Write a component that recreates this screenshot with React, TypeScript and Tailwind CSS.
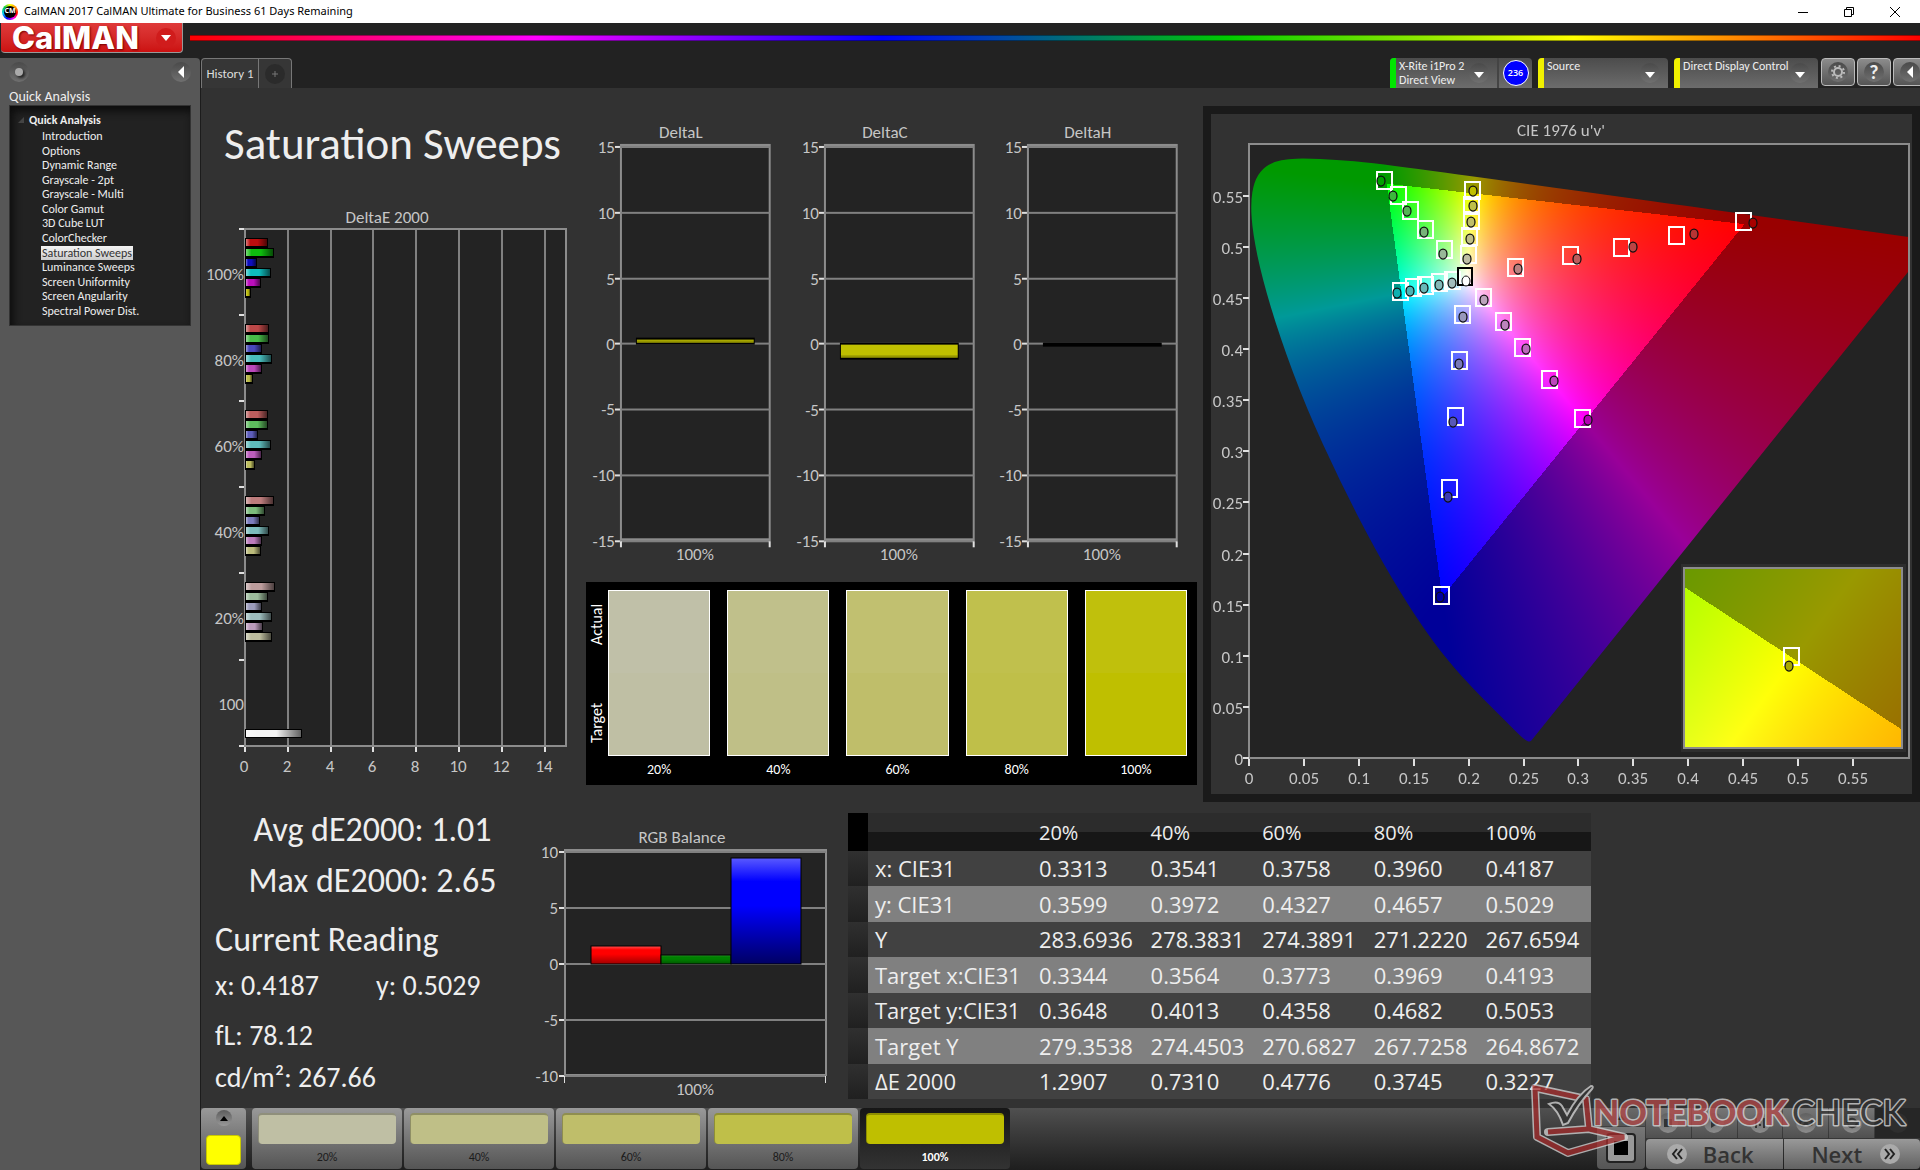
import React, { useEffect, useRef } from "react";

/* ---------- measurement data ---------- */

const STEPS = [
  "Introduction", "Options", "Dynamic Range", "Grayscale - 2pt", "Grayscale - Multi", "Color Gamut", "3D Cube LUT",
  "ColorChecker", "Saturation Sweeps", "Luminance Sweeps", "Screen Uniformity", "Screen Angularity", "Spectral Power Dist.",
];

const DELTA_E = [
  { label: "100%", low: 14, bars: [23, 29, 12, 26, 16, 6] },
  { label: "80%", low: 72, bars: [24, 24, 17, 27, 17, 8] },
  { label: "60%", low: 94, bars: [23, 23, 13, 26, 17, 10] },
  { label: "40%", low: 124, bars: [29, 20, 15, 24, 17, 16] },
  { label: "20%", low: 156, bars: [30, 23, 17, 27, 18, 27] },
];

const SWATCHES = [
  { label: "20%", actual: "#c0c0a8", target: "#bfbfa4" },
  { label: "40%", actual: "#c0c08b", target: "#bfbf87" },
  { label: "60%", actual: "#c1c070", target: "#bfbe6a" },
  { label: "80%", actual: "#c0c04d", target: "#bfbf49" },
  { label: "100%", actual: "#c0c00c", target: "#bfbf00" },
];

const TABLE = [
  ["x: CIE31", "0.3313", "0.3541", "0.3758", "0.3960", "0.4187"],
  ["y: CIE31", "0.3599", "0.3972", "0.4327", "0.4657", "0.5029"],
  ["Y", "283.6936", "278.3831", "274.3891", "271.2220", "267.6594"],
  ["Target x:CIE31", "0.3344", "0.3564", "0.3773", "0.3969", "0.4193"],
  ["Target y:CIE31", "0.3648", "0.4013", "0.4358", "0.4682", "0.5053"],
  ["Target Y", "279.3538", "274.4503", "270.6827", "267.7258", "264.8672"],
  ["ΔE 2000", "1.2907", "0.7310", "0.4776", "0.3745", "0.3227"],
];

/* target x, target y, reading x, reading y, reading colour */
const PINS: [number, number, number, number, string][] = [
  [174, 67, 170, 67, "#00a000"], [188, 82, 182, 82, "#3cb83c"], [200, 97, 196, 97, "#55b455"],
  [215, 116, 213, 118, "#78b478"], [234, 136, 232, 140, "#98b898"],
  [258, 141, 256, 145, "#bfbfa4"], [259, 123, 259, 125, "#bfbf87"], [261, 107, 260, 108, "#bfbe6a"],
  [261, 92, 262, 92, "#bfbf49"], [262, 77, 262, 77, "#bfbf00"],
  [190, 178, 186, 179, "#10b0b0"], [203, 174, 199, 177, "#4cb4b4"], [215, 172, 213, 174, "#68b8b8"],
  [229, 169, 228, 171, "#84b8b8"], [242, 167, 241, 169, "#a2bcbc"],
  [273, 184, 273, 186, "#bca4bc"], [293, 208, 294, 211, "#bc84bc"], [312, 234, 315, 235, "#bc68bc"],
  [339, 266, 343, 267, "#bc48bc"], [372, 305, 377, 306, "#b400b4"],
  [252, 201, 252, 203, "#9898bc"], [249, 247, 248, 250, "#7878b8"], [245, 303, 242, 308, "#5858b8"],
  [239, 375, 237, 383, "#3c3cb4"], [231, 482, 229, 483, "#0000a0"],
  [305, 154, 307, 155, "#bc8080"], [360, 142, 366, 145, "#bc5c5c"], [411, 134, 422, 133, "#bc4444"],
  [466, 122, 483, 120, "#b83434"], [533, 108, 542, 109, "#a80000"],
];

/* ---------- chromaticity diagram ---------- */

const LOCUS_XY = [
  [0.1741, 0.005], [0.1733, 0.0048], [0.1714, 0.0051], [0.1689, 0.0069], [0.1644, 0.0109], [0.1566, 0.0177],
  [0.151, 0.0227], [0.144, 0.0297], [0.1355, 0.0399], [0.1241, 0.0578], [0.1096, 0.0868], [0.0913, 0.1327],
  [0.0687, 0.2007], [0.0454, 0.295], [0.0235, 0.4127], [0.0082, 0.5384], [0.0039, 0.6548], [0.0139, 0.7502],
  [0.0389, 0.812], [0.0743, 0.8338], [0.1142, 0.8262], [0.1547, 0.8059], [0.2296, 0.7543], [0.3016, 0.6923],
  [0.3731, 0.6245], [0.4441, 0.5547], [0.5125, 0.4866], [0.5752, 0.4242], [0.627, 0.3725], [0.6915, 0.3083],
  [0.7347, 0.2653],
];

const CIE_W = 701;
const CIE_H = 680;
const PLOT = { left: 38, top: 30, right: 698, bottom: 644 };
const U_SCALE = 1098;
const V_SCALE = 1022;
const INSET = { left: 473, top: 454, width: 218, height: 180 };

function colourAt(x: number, y: number): [number, number, number] {
  const X = x / y;
  const Z = (1 - x - y) / y;
  const r = 3.2406 * X - 1.5372 - 0.4986 * Z;
  const g = -0.9689 * X + 1.8758 + 0.0415 * Z;
  const b = 0.0557 * X - 0.204 + 1.057 * Z;
  const inside = r >= 0 && g >= 0 && b >= 0;
  const k = (inside ? 255 : 153) / Math.max(r, g, b, 0.0001);
  return [Math.max(r, 0) * k, Math.max(g, 0) * k, Math.max(b, 0) * k];
}

function field(width: number, height: number, toXy: (px: number, py: number) => [number, number]) {
  const canvas = document.createElement("canvas");
  canvas.width = width;
  canvas.height = height;
  const ctx = canvas.getContext("2d")!;
  const image = ctx.createImageData(width, height);
  for (let j = 0; j < height; j++) {
    for (let i = 0; i < width; i++) {
      const [x, y] = toXy(i, j);
      const [r, g, b] = colourAt(x, y);
      const o = (j * width + i) * 4;
      image.data[o] = r;
      image.data[o + 1] = g;
      image.data[o + 2] = b;
      image.data[o + 3] = 255;
    }
  }
  ctx.putImageData(image, 0, 0);
  return canvas;
}

function CieChart() {
  const ref = useRef<HTMLCanvasElement>(null);
  useEffect(() => {
    const ctx = ref.current?.getContext("2d");
    if (!ctx) return;
    const horseshoe = field(CIE_W, CIE_H, (px, py) => {
      const u = (px - PLOT.left) / U_SCALE;
      const v = (PLOT.bottom - py) / V_SCALE;
      const d = 6 * u - 16 * v + 12;
      return [(9 * u) / d, Math.max((4 * v) / d, 0.0005)];
    });
    const mask = horseshoe.getContext("2d")!;
    const p = LOCUS_XY.map(([x, y]) => {
      const d = -2 * x + 12 * y + 3;
      return [PLOT.left + ((4 * x) / d) * U_SCALE, PLOT.bottom - ((9 * y) / d) * V_SCALE];
    });
    mask.globalCompositeOperation = "destination-in";
    mask.beginPath();
    mask.moveTo(p[0][0], p[0][1]);
    for (let i = 1; i < p.length - 1; i++) {
      mask.quadraticCurveTo(p[i][0], p[i][1], (p[i][0] + p[i + 1][0]) / 2, (p[i][1] + p[i + 1][1]) / 2);
    }
    mask.lineTo(p[p.length - 1][0], p[p.length - 1][1]);
    mask.closePath();
    mask.fill();

    ctx.fillStyle = "#232323";
    ctx.fillRect(PLOT.left, PLOT.top, PLOT.right - PLOT.left, PLOT.bottom - PLOT.top);
    ctx.save();
    ctx.beginPath();
    ctx.rect(PLOT.left, PLOT.top, PLOT.right - PLOT.left, PLOT.bottom - PLOT.top);
    ctx.clip();
    ctx.drawImage(horseshoe, 0, 0);
    ctx.restore();

    const detail = field(INSET.width, INSET.height, (px, py) => [
      0.4193 + (px / INSET.width - 0.5) * 0.05,
      0.5053 - (py / INSET.height - 0.5) * 0.05,
    ]);
    ctx.fillStyle = "#2e2e2e";
    ctx.fillRect(INSET.left - 3, INSET.top - 4, INSET.width + 7, INSET.height + 8);
    ctx.drawImage(detail, INSET.left, INSET.top);
  }, []);

  return (
    <figure className="relative border-8 border-[#1a1a1a] bg-[#323232]">
      <canvas ref={ref} width={CIE_W} height={CIE_H} className="block w-full" />
      <svg viewBox="0 0 701 680" className="absolute inset-0 h-full w-full" fontSize="17" fill="#c6c6c6">
        <text x="350" y="22" textAnchor="middle">CIE 1976 u'v'</text>
        <rect x="38" y="30" width="660" height="614" fill="none" stroke="#8c8c8c" strokeWidth="2" />
        {["0", "0.05", "0.1", "0.15", "0.2", "0.25", "0.3", "0.35", "0.4", "0.45", "0.5", "0.55"].map((t, i) => (
          <g key={t}>
            <rect x="32" y={643 - Math.round(i * 51.1)} width="6" height="2" fill="#e0e0e0" />
            <text x="32" y={651 - Math.round(i * 51.1)} textAnchor="end">{t}</text>
            <rect x={37 + Math.round(i * 54.9)} y="645" width="2" height="7" fill="#e0e0e0" />
            <text x={38 + Math.round(i * 54.9)} y="670" textAnchor="middle">{t}</text>
          </g>
        ))}
        {PINS.map(([tx, ty, rx, ry, c]) => (
          <g key={`${tx}-${ty}`}>
            <rect x={tx - 8} y={ty - 9} width="15" height="17" fill="none" stroke="#fff" strokeWidth="1.25" shapeRendering="crispEdges" />
            <ellipse cx={rx} cy={ry} rx="4" ry="5" fill={c} stroke="#101010" strokeWidth="1.25" />
          </g>
        ))}
        <rect x="247" y="154" width="14" height="17" fill="none" stroke="#000" strokeWidth="1.25" shapeRendering="crispEdges" />
        <ellipse cx="255" cy="167" rx="4" ry="5" fill="#fff" stroke="#101010" />
        <rect x="473" y="454" width="218" height="180" fill="none" stroke="#8c8c8c" strokeWidth="2" />
        <rect x="573" y="534" width="15" height="17" fill="none" stroke="#fff" strokeWidth="1.25" shapeRendering="crispEdges" />
        <ellipse cx="578" cy="552" rx="4" ry="5" fill="#a8a800" stroke="#101010" strokeWidth="1.25" />
      </svg>
    </figure>
  );
}

/* ---------- bar charts ---------- */

function DeltaEChart() {
  return (
    <svg viewBox="0 0 379 570" className="block w-full" fontSize="17" fill="#c6c6c6">
      <defs>
        <linearGradient id="barShade">
          <stop offset="0" stopColor="#fff" stopOpacity=".45" />
          <stop offset=".2" stopColor="#fff" stopOpacity="0" />
          <stop offset=".55" stopColor="#000" stopOpacity="0" />
          <stop offset="1" stopColor="#000" stopOpacity=".6" />
        </linearGradient>
      </defs>
      <text x="186" y="18" textAnchor="middle">DeltaE 2000</text>
      <rect x="44" y="24" width="321" height="517" fill="#232323" />
      {[1, 2, 3, 4, 5, 6, 7].map((i) => (
        <rect key={i} x={43 + Math.round(i * 42.8)} y="24" width="2" height="522" fill="#808080" />
      ))}
      <rect x="44" y="24" width="321" height="517" fill="none" stroke="#8c8c8c" strokeWidth="2" />
      {[0, 1, 2, 3, 4, 5, 6].map((i) => (
        <rect key={i} x="38" y={23 + Math.round(i * 86.1)} width="5" height="2" fill="#e0e0e0" />
      ))}
      {[0, 1, 2, 3, 4, 5, 6, 7].map((i) => (
        <g key={i}>
          <rect x={43 + Math.round(i * 42.8)} y="542" width="2" height="5" fill="#e0e0e0" />
          <text x={43 + Math.round(i * 42.8)} y="567" textAnchor="middle">{i * 2}</text>
        </g>
      ))}
      {DELTA_E.map(({ label, low, bars }, g) => {
        const top = Math.round(g * 86.1) + 33;
        const h = 188;
        const colours = [
          `rgb(${h},${low},${low})`, `rgb(${low},${h},${low})`, `rgb(${low},${low},${h})`,
          `rgb(${low},${h},${h})`, `rgb(${h},${low},${h})`, `rgb(${h},${h},${low})`,
        ];
        return (
          <g key={label}>
            <text x="43" y={top + 42} textAnchor="end">{label}</text>
            {bars.map((w, i) => (
              <g key={i}>
                <rect x="44" y={top + i * 10} width={w} height="10" fill="#000" />
                <rect x="45" y={top + i * 10 + 1} width={w - 2} height="7" fill={colours[i]} />
                <rect x="45" y={top + i * 10 + 1} width={w - 2} height="7" fill="url(#barShade)" />
              </g>
            ))}
          </g>
        );
      })}
      <text x="43" y="505" textAnchor="end">100</text>
      <rect x="44" y="524" width="57" height="9" fill="#000" />
      <rect x="45" y="525" width="55" height="7" fill="#f4f4f4" />
      <rect x="45" y="525" width="55" height="7" fill="url(#barShade)" />
    </svg>
  );
}

function DeltaChart({ name, y, height, colour }: { name: string; y: number; height: number; colour: string }) {
  return (
    <svg viewBox="0 0 204 450" className="block w-full" fontSize="17" fill="#c6c6c6">
      <text x="95" y="18" textAnchor="middle">{name}</text>
      <rect x="35" y="25" width="149" height="396" fill="#232323" stroke="#8c8c8c" strokeWidth="2" />
      <rect x="35" y="24" width="149" height="4" fill="#8c8c8c" />
      <rect x="35" y="419" width="149" height="3" fill="#8c8c8c" />
      {[15, 10, 5, 0, -5, -10, -15].map((t, i) => (
        <g key={t}>
          <rect x="35" y={26 + Math.round(i * 65.8)} width="149" height="2" fill="#808080" />
          <rect x="29" y={26 + Math.round(i * 65.8)} width="5" height="2" fill="#e0e0e0" />
          <text x="29" y={33 + Math.round(i * 65.8)} textAnchor="end">{t}</text>
        </g>
      ))}
      <rect x="34" y="422" width="2" height="6" fill="#e0e0e0" />
      <rect x="183" y="422" width="2" height="6" fill="#e0e0e0" />
      <text x="109" y="441" textAnchor="middle">100%</text>
      <rect x="50" y={y} width="119" height={height} fill="#000" />
      <rect x="51" y={y + 2} width="117" height={Math.max(height - 4, 0)} fill={colour} />
      <rect x="51" y={y + height - 4} width="117" height="1" fill="#000" opacity=".35" />
    </svg>
  );
}

function RgbBalance() {
  return (
    <svg viewBox="0 0 318 284" className="block w-full" fontSize="17" fill="#c6c6c6">
      <defs>
        {[["balR", "#ff5050", "#ff0000", "#a00000"], ["balG", "#309830", "#008000", "#005800"], ["balB", "#5a5aff", "#0000ff", "#000064"]].map(
          ([id, a, b, c]) => (
            <linearGradient key={id} id={id} x1="0" y1="0" x2="0" y2="1">
              <stop offset="0" stopColor={a} />
              <stop offset=".22" stopColor={b} />
              <stop offset=".45" stopColor={b} />
              <stop offset="1" stopColor={c} />
            </linearGradient>
          ),
        )}
      </defs>
      <text x="152" y="23" textAnchor="middle">RGB Balance</text>
      <rect x="35" y="30" width="261" height="225" fill="#232323" stroke="#8c8c8c" strokeWidth="2" />
      <rect x="35" y="29" width="261" height="4" fill="#8c8c8c" />
      {[10, 5, 0, -5, -10].map((t, i) => (
        <g key={t}>
          <rect x="35" y={31 + i * 56} width="261" height="2" fill="#808080" />
          <rect x="29" y={31 + i * 56} width="5" height="2" fill="#e0e0e0" />
          <text x="28" y={38 + i * 56} textAnchor="end">{t}</text>
        </g>
      ))}
      <rect x="34" y="256" width="1" height="7" fill="#e0e0e0" />
      <rect x="295" y="256" width="1" height="7" fill="#e0e0e0" />
      <text x="165" y="275" textAnchor="middle">100%</text>
      <rect x="61" y="126" width="70" height="18" fill="url(#balR)" stroke="#000" />
      <rect x="131" y="135" width="70" height="9" fill="url(#balG)" stroke="#000" />
      <rect x="201" y="38" width="70" height="106" fill="url(#balB)" stroke="#000" />
    </svg>
  );
}

/* ---------- small drawings ---------- */

function Knob({ children, className = "" }: { children: React.ReactNode; className?: string }) {
  return (
    <span className={`flex size-5 shrink-0 items-center justify-center rounded-full bg-linear-to-b from-[#4a4a4a] to-[#707070] ${className}`}>
      {children}
    </span>
  );
}

function DownArrow() {
  return (
    <svg viewBox="0 0 10 6" className="mt-1 h-1.5 w-2.5 fill-white"><path d="M0 0h10L5 6z" /></svg>
  );
}

function DeviceTab({ strip, lines, width, children }: { strip: string; lines: string[]; width: string; children?: React.ReactNode }) {
  return (
    <div className={`flex h-[30px] overflow-hidden rounded-t bg-linear-to-b from-[#4c4c4c] to-[#6c6c6c] ${width}`}>
      <span className={`w-1.5 shrink-0 ${strip}`} />
      <button type="button" className="flex grow items-start justify-between pt-px pr-2 pl-[3px] text-left text-xs leading-[14px] whitespace-nowrap text-[#eee]">
        <span>{lines.map((l) => <span key={l} className="block">{l}</span>)}</span>
        <Knob className="mt-1 -ml-1"><DownArrow /></Knob>
      </button>
      {children}
    </div>
  );
}

function NotebookcheckMark() {
  const box = "M28 52 L69 49 L66 19 L15 8 L17 57 L48 73 L104 57 L69 49";
  return (
    <svg viewBox="0 0 400 90" className="pointer-events-none absolute right-0 bottom-0 h-[90px] w-[400px] opacity-75" role="img" aria-label="NOTEBOOKCHECK">
      <path d={box} fill="none" stroke="#d8d8d8" strokeWidth="8" strokeLinejoin="round" strokeLinecap="round" />
      <path d={box} fill="none" stroke="#a52c2c" strokeWidth="5" strokeLinejoin="miter" />
      <path d="M29 24 Q38 20 42 26 L47 35 Q58 14 71 6 Q74 6 72 9 Q58 24 48 43 L43 45 Q38 30 29 24Z" fill="#303030" stroke="#d8d8d8" strokeWidth="2" />
      <g fontFamily="Lato, sans-serif" fontSize="34" stroke="#dcdcdc" strokeWidth="3" paintOrder="stroke" strokeLinejoin="round">
        <text x="73" y="45" fontWeight="900" fill="#b44848">NOTEBOOK</text>
        <text x="272" y="45" fontWeight="500" fill="#303030">CHECK</text>
      </g>
    </svg>
  );
}

const TRANSPORT = [
  <rect key="s" x="4" y="4" width="8" height="8" />,
  <path key="p" d="M5 3l8 5-8 5z" />,
  <path key="i" d="M3 3h2v10H3zM11 3h2v10h-2zM7 5h2v2H7zM7 9h2v2H7z" />,
  <path key="l" d="M8 8C6 5 2 5 2 8s4 3 6 0 6-3 6 0-4 3-6 0z" fill="none" stroke="#333" strokeWidth="2" />,
  <path key="r" d="M3 8a5 5 0 0 1 9-2M13 8a5 5 0 0 1-9 2" fill="none" stroke="#333" strokeWidth="2" />,
];
const TRANSPORT_NAMES = ["Stop", "Read", "Read series", "Read continuous", "Refresh"];

/* ---------- page ---------- */

export default function App() {
  return (
    <div className="relative flex min-h-screen flex-col overflow-hidden bg-[#222] font-[Carlito,Calibri,Lato,sans-serif] text-[#eee]">
      <header className="flex h-[23px] items-center bg-white pl-0.5 font-['Noto_Sans',sans-serif] text-[11px] text-black">
        <span className="flex size-4 items-center justify-center rounded-full bg-[conic-gradient(#ff0,#f80,#f00,#f0f,#00f,#0cf,#0c4,#ff0)]">
          <span className="flex size-3 items-center justify-center rounded-full bg-black text-[7px] font-bold text-white">CM</span>
        </span>
        <h1 className="ml-1.5 grow">CalMAN 2017 CalMAN Ultimate for Business 61 Days Remaining</h1>
        <div className="mr-0.5 flex w-[138px] items-center justify-around">
          <button type="button" aria-label="Minimize" className="size-4"><svg viewBox="0 0 16 16"><path d="M3 8.500h10" stroke="#000" /></svg></button>
          <button type="button" aria-label="Restore" className="size-4">
            <svg viewBox="0 0 16 16" fill="none" stroke="#000"><path d="M3.500 5.500h7v7h-7zM5.500 5.500v-2h7v7h-2" /></svg>
          </button>
          <button type="button" aria-label="Close" className="size-4"><svg viewBox="0 0 16 16" stroke="#000"><path d="M3 3l10 10M13 3L3 13" /></svg></button>
        </div>
      </header>

      <div className="flex h-[35px] items-start">
        <button type="button" className="ml-px flex h-[30px] w-[182px] items-center justify-between rounded-b border-r border-b border-[#999] bg-linear-to-b from-[#df3a3a] to-[#cc1010] pr-1.5 pl-[11px] text-white">
          <span className="font-[Inter,sans-serif] text-[31px] leading-7 font-extrabold [text-shadow:1px_1px_2px_#700]">CalMAN</span>
          <span className="flex size-5 items-center justify-center rounded-full bg-[#d01c1c]">
            <svg viewBox="0 0 10 6" className="h-1.5 w-2.5 fill-white"><path d="M0 0h10L5 6z" /></svg>
          </span>
        </button>
        <div className="mt-3 ml-[7px] h-1.5 grow border-y border-black/40 bg-[linear-gradient(90deg,#f00,#f0f,#00f,#0c0,#ff0,#f00)]" />
      </div>

      <div className="flex grow">
        <nav className="flex w-[200px] shrink-0 flex-col rounded-tr bg-[#575757] px-[9px]">
          <div className="flex h-7 items-center justify-between">
            <button type="button" aria-label="Record"><Knob><span className="size-2 rounded-full bg-[#aaa] shadow-[2px_2px_3px_#222]" /></Knob></button>
            <button type="button" aria-label="Collapse panel"><Knob><svg viewBox="0 0 6 12" className="h-3 w-1.5 fill-white"><path d="M6 0v12L0 6z" /></svg></Knob></button>
          </div>
          <h2 className="pt-0.5 text-sm leading-[17px]">Quick Analysis</h2>
          <div className="h-[221px] border border-[#333] bg-[#222] pt-1.5 shadow-[inset_3px_5px_8px_#0c0c0c]">
            <div className="flex h-4 items-center pl-2 text-xs font-bold">
              <svg viewBox="0 0 6 6" className="mr-[5px] size-1.5 fill-[#444]"><path d="M6 0v6H0z" /></svg>
              Quick Analysis
            </div>
            <ul className="mt-px flex h-[189px] flex-col justify-between pl-[31px] text-xs leading-[14px]">
              {STEPS.map((s) => (
                <li key={s} className="h-3.5">
                  <a href="#" className={s === "Saturation Sweeps" ? "block w-fit bg-linear-to-b from-[#f4f4f4] to-[#ccc] px-px text-[#333]" : "block w-fit px-px"}>{s}</a>
                </li>
              ))}
            </ul>
          </div>
        </nav>

        <div className="flex min-w-0 grow flex-col border-l border-[#1c1c1c]">
          <div className="flex h-[30px] items-start">
            <div className="flex h-[30px] rounded-t border border-b-0 border-[#777] bg-[#363636] text-[13px] text-[#ddd]">
              <button type="button" className="w-[57px] border-r border-[#777] whitespace-nowrap">History 1</button>
              <button type="button" aria-label="Add tab" className="px-1.5">
                <span className="flex size-5 items-center justify-center rounded-full bg-[#2b2b2b]">
                  <svg viewBox="0 0 8 8" className="size-2" stroke="#777"><path d="M4 1v6M1 4h6" /></svg>
                </span>
              </button>
            </div>
            <div className="ml-auto flex gap-1.5">
              <DeviceTab strip="bg-[#00e600]" lines={["X-Rite i1Pro 2", "Direct View"]} width="w-[142px]">
                <span className="flex w-[35px] shrink-0 items-center justify-center border-l-2 border-[#444]">
                  <span className="flex size-[26px] items-center justify-center rounded-full border border-white bg-[#0000ff] font-['Open_Sans',sans-serif] text-[9px] font-semibold text-white">236</span>
                </span>
              </DeviceTab>
              <DeviceTab strip="bg-[#f0f000]" lines={["Source"]} width="w-[130px]" />
              <DeviceTab strip="bg-[#f0f000]" lines={["Direct Display Control"]} width="w-[144px]" />
            </div>
            <div className="-mr-[7px] ml-[3px] flex gap-0.5">
              <button type="button" aria-label="Settings" className="flex h-7 w-[34px] items-center justify-center rounded border border-[#bbb] bg-linear-to-b from-[#8c8c8c] to-[#555]">
                <Knob>
                  <svg viewBox="0 0 16 16" className="size-4" fill="none" stroke="#bbb">
                    <circle cx="8" cy="8" r="4" strokeWidth="2" />
                    <circle cx="8" cy="8" r="6" strokeWidth="2" strokeDasharray="2 2.700" />
                  </svg>
                </Knob>
              </button>
              <button type="button" aria-label="Help" className="flex h-7 w-[34px] items-center justify-center rounded border border-[#bbb] bg-linear-to-b from-[#8c8c8c] to-[#555] text-xl leading-5 font-bold">
                <Knob>?</Knob>
              </button>
              <button type="button" aria-label="Collapse toolbar" className="flex h-7 w-[34px] items-center justify-center rounded border border-[#bbb] bg-linear-to-b from-[#8c8c8c] to-[#555]">
                <Knob><svg viewBox="0 0 6 12" className="h-3 w-1.5 fill-white"><path d="M6 0v12L0 6z" /></svg></Knob>
              </button>
            </div>
          </div>

          <main className="grow bg-[#323232]">
            <div className="grid grid-cols-[379fr_617fr_723fr] items-start">
              <section>
                <h2 className="flex h-[117px] items-center justify-center pb-1.5 pl-1 text-[45px] leading-none">Saturation Sweeps</h2>
                <DeltaEChart />
              </section>
              <section className="pt-8 pl-1.5">
                <div className="grid grid-cols-3">
                  <DeltaChart name="DeltaL" y={218} height={7} colour="#c0c000" />
                  <DeltaChart name="DeltaC" y={223} height={17} colour="#c0c000" />
                  <DeltaChart name="DeltaH" y={223} height={4} colour="#000" />
                </div>
                <div className="mt-[13px] flex bg-black pt-2 pb-0.5 text-sm text-white">
                  <div className="flex w-[22px] shrink-0 rotate-180 flex-row-reverse items-center justify-between pt-10 pb-3.5 text-base leading-5 [writing-mode:vertical-rl]">
                    <span>Actual</span>
                    <span>Target</span>
                  </div>
                  <div className="grid grow grid-cols-5 gap-[17px] pr-2.5">
                    {SWATCHES.map((s) => (
                      <div key={s.label} className="text-center">
                        <div className="h-[166px] border border-white">
                          <div className="h-1/2" style={{ background: s.actual }} />
                          <div className="h-1/2" style={{ background: s.target }} />
                        </div>
                        <div className="leading-[27px]">{s.label}</div>
                      </div>
                    ))}
                  </div>
                </div>
              </section>
              <section className="pt-[18px] pl-1.5"><CieChart /></section>
            </div>

            <div className="grid grid-cols-[329fr_318fr_743fr_329fr] items-start">
              <section className="pt-0.5 pl-3.5 text-[28px] leading-[42px] whitespace-nowrap">
                <p className="text-center text-[34px] leading-[51px]">Avg dE2000: 1.01</p>
                <p className="text-center text-[34px] leading-[51px]">Max dE2000: 2.65</p>
                <h3 className="mt-2 text-[34px] leading-[51px]">Current Reading</h3>
                <p className="flex"><span className="w-[161px]">x: 0.4187</span><span>y: 0.5029</span></p>
                <p className="mt-2">fL: 78.12</p>
                <p>cd/m²: 267.66</p>
              </section>
              <section className="pt-[18px]"><RgbBalance /></section>
              <table className="mt-[11px] w-full table-fixed border-collapse text-left font-['Open_Sans',sans-serif] text-[22px]">
                <colgroup>
                  <col className="w-5" />
                  <col className="w-[165px]" />
                  <col /><col /><col /><col /><col />
                </colgroup>
                <thead>
                  <tr className="h-[38px] text-xl">
                    <th className="bg-black" />
                    <th className="bg-[linear-gradient(#2c2c2c_50%,#171717_50%)]" />
                    {SWATCHES.map((s) => (
                      <th key={s.label} scope="col" className="bg-[linear-gradient(#2c2c2c_50%,#171717_50%)] p-0 pt-0.5 pl-1.5 font-medium">{s.label}</th>
                    ))}
                  </tr>
                </thead>
                <tbody>
                  {TABLE.map(([name, ...cells], i) => (
                    <tr key={name} className={i % 2 ? "h-9 bg-[#808080]" : "h-[35px] bg-[#414141]"}>
                      <td className="bg-linear-to-b from-[#303030] to-[#202020]" />
                      <th scope="row" className="p-0 pl-[7px] leading-[35px] font-normal whitespace-nowrap">{name}</th>
                      {cells.map((c) => <td key={c} className="p-0 pl-1.5 leading-[35px]">{c}</td>)}
                    </tr>
                  ))}
                </tbody>
              </table>
            </div>
          </main>

          <footer className="flex h-[62px] shrink-0 items-start bg-linear-to-b from-[#505050] to-[#1e1e1e]">
            <div className="mr-1.5 flex h-[61px] w-[45px] flex-col items-center justify-between rounded bg-linear-to-b from-[#999] to-[#555] pb-1">
              <button type="button" aria-label="Expand" className="mt-0.5 flex size-4 items-center justify-center rounded-full bg-linear-to-b from-[#5c5c5c] to-[#999]">
                <svg viewBox="0 0 8 5" className="h-[5px] w-2 fill-black"><path d="M4 0l4 5H0z" /></svg>
              </button>
              <span className="h-[30px] w-[35px] rounded-sm border border-[#c8c800] bg-[#ffff00]" />
            </div>
            <div className="flex gap-0.5">
              {SWATCHES.map((s, i) => (
                <button
                  key={s.label}
                  type="button"
                  className={
                    i === 4
                      ? "flex h-[61px] w-[150px] flex-col rounded bg-linear-to-b from-[#161616] to-[#333] px-1.5 pt-[5px] text-xs font-bold text-white"
                      : "flex h-[61px] w-[150px] flex-col rounded bg-linear-to-b from-[#999] to-[#555] px-1.5 pt-[5px] text-xs text-[#1c1c1c]"
                  }
                >
                  <span className="h-9 w-full rounded border-t-2 border-l border-black/25 bg-clip-border" style={{ background: s.target }} />
                  <span className="w-full pt-px text-center leading-6">{s.label}</span>
                </button>
              ))}
            </div>

            <div className="ml-auto flex gap-px">
              <div className="flex h-[61px] w-12 flex-col gap-px">
                <button type="button" aria-label="Expand controls" className="flex h-[18px] items-center justify-center rounded-t bg-linear-to-b from-[#6a6a6a] to-[#555]">
                  <svg viewBox="0 0 8 5" className="h-[5px] w-2 fill-[#222]"><path d="M4 0l4 5H0z" /></svg>
                </button>
                <button type="button" aria-label="Pattern window" className="flex grow items-center justify-center rounded-b bg-linear-to-b from-[#777] to-[#555]">
                  <span className="flex size-[30px] items-center justify-center rounded border-2 border-[#222] bg-[#999]"><span className="size-3.5 bg-black" /></span>
                </button>
              </div>
              <div className="flex w-[274px] flex-col gap-px">
                <div className="grid h-[30px] grid-cols-6 gap-px">
                  {TRANSPORT.map((icon, i) => (
                    <button key={i} type="button" aria-label={TRANSPORT_NAMES[i]} className="flex items-center justify-center bg-linear-to-b from-[#777] to-[#505050]">
                      <span className="flex size-5 items-center justify-center rounded-full bg-linear-to-b from-[#606060] to-[#8c8c8c]">
                        <svg viewBox="0 0 16 16" className="size-4 fill-[#333]">{icon}</svg>
                      </span>
                    </button>
                  ))}
                  <span className="flex items-center justify-center bg-[#262626]"><span className="size-5 rounded-full bg-[#2e2e2e]" /></span>
                </div>
                <div className="grid h-[30px] grid-cols-2 gap-px font-['Open_Sans',sans-serif] text-[22px] leading-none font-semibold text-[#333]">
                  <button type="button" className="flex items-center justify-center gap-4 rounded-l bg-linear-to-b from-[#999] to-[#626262] pr-2">
                    <span className="flex size-5 items-center justify-center rounded-full bg-[#aaa]">
                      <svg viewBox="0 0 12 12" className="size-3" fill="none" stroke="#222" strokeWidth="2"><path d="M6 1L2 6l4 5M11 1L7 6l4 5" /></svg>
                    </span>
                    Back
                  </button>
                  <button type="button" className="flex items-center justify-center gap-[18px] rounded-r bg-linear-to-b from-[#999] to-[#626262] pl-2">
                    Next
                    <span className="flex size-5 items-center justify-center rounded-full bg-[#aaa]">
                      <svg viewBox="0 0 12 12" className="size-3" fill="none" stroke="#222" strokeWidth="2"><path d="M1 1l4 5-4 5M6 1l4 5-4 5" /></svg>
                    </span>
                  </button>
                </div>
              </div>
            </div>
          </footer>
        </div>
      </div>
      <NotebookcheckMark />
    </div>
  );
}
